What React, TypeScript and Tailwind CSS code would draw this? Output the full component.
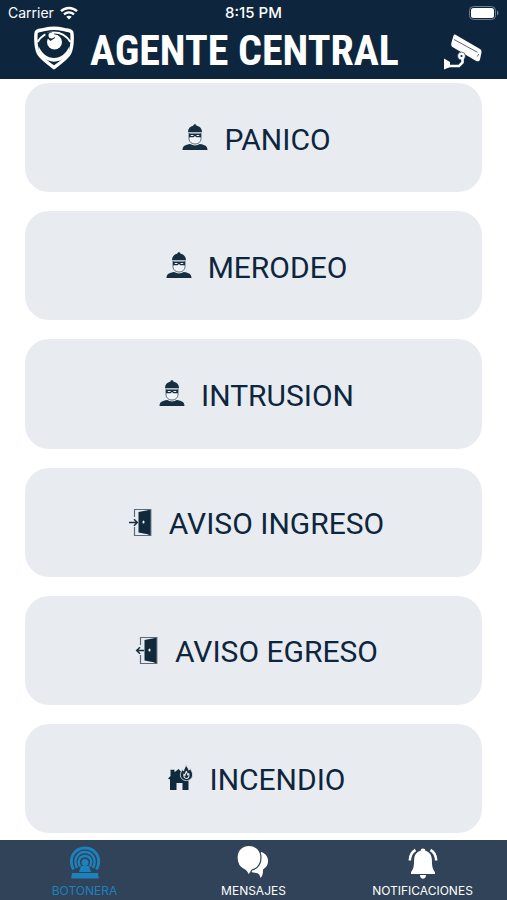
import type { ReactNode } from "react";

const ThiefIcon = () => (
  <svg viewBox="0 0 26 28" className="h-7 w-[26px]" fill="#152f40" aria-hidden="true">
    <path d="M6 8.200C6 4.500 8 2.400 11.300 1.800 11.400.8 11.900.3 12.900.3s1.500.5 1.600 1.500C17.800 2.400 20 4.500 20 8.200z" />
    <path d="M7 9v5.500c0 3.200 2.600 5.500 6 5.500s6-2.300 6-5.500V9" fill="#f1f4f7" stroke="#152f40" strokeWidth=".7" />
    <path d="M7 9.500h12v3.800h-4.600L13 12l-1.400 1.300H7z" />
    <path d="M8.800 10.900h2.700v1.100H8.800zM14.500 10.900h2.700v1.100h-2.700z" fill="#f1f4f7" />
    <path d="M.5 26c0-3.600 2.600-5.300 7.800-5.900 2.600 1.700 6.800 1.700 9.400 0 5.200.6 7.800 2.300 7.800 5.900z" />
  </svg>
);

const DoorIcon = ({ exit = false }: { exit?: boolean }) => (
  <svg viewBox="0 0 24 28" className="h-7 w-6" fill="none" stroke="#152f40" aria-hidden="true">
    <path d="M5.500 9V1.500h16.300v26H5.500V19" stroke="#5a6c79" strokeWidth="1.200" />
    <path d="M9.500 4 20 2v24.500l-10.500-2z" fill="#10293b" stroke="none" />
    <path d="M20.500 2v25" stroke="#10293b" strokeWidth="2" />
    <ellipse cx="14.500" cy="14" rx="1" ry="1.500" fill="#fff" stroke="none" />
    <path
      d={exit ? "M9 14.500H2M5 11.300 1.700 14.500 5 17.700" : "M0 14.500h8M5 11.300l3.300 3.200L5 17.700"}
      strokeWidth="1.500"
    />
  </svg>
);

const FireIcon = () => (
  <svg viewBox="0 0 26 28" className="h-7 w-[26px]" fill="#10293b" aria-hidden="true">
    <path d="M1 14.500 3.500 12V5.800h4v2.500L11.500 5l3 3 8.500 7-1.500 1.500V26h-6v-7H9.500v7H3V15.500z" />
    <path
      d="M19 0c.4 3 2.300 3.700 2.900 6.300l1.500-1.700c.3 1.500 2.300 3.500 2.200 6.400-.1 3.300-2.700 5.600-6.100 5.600-3.600 0-6.300-2.500-6.100-5.900.1-2.500 1.300-3.700 1.800-5.300l1.300 1.700C17 4.900 18.800 3 19 0z"
      stroke="#e8ecf1"
      strokeWidth=".8"
    />
    <path
      d="M19.500 7c.1 1.800 1 2.300 1.100 3.600l1.200-.9c.7 2.500-.2 4.500-2 4.800-2.300.1-3.400-1.900-2.900-4.200l1.100 1c-.1-1.600 1.100-2.600 1.500-4.300z"
      fill="none"
      stroke="#e8ecf1"
      strokeWidth="1.100"
    />
  </svg>
);

const ShieldLogo = () => (
  <svg viewBox="0 0 40 44" className="h-11 w-10" fill="none" aria-hidden="true">
    <path
      d="M2 7.500C2 5 4 4.700 8 4c5-1 8-1.700 12-1.700S27 3 32 4c4 .7 6 1 6 3.500.5 8 .5 14-2.500 20C33 32 27 36.500 20 41.500 13 36.500 7 32 4.500 27.500 1.500 21.500 1.500 15.500 2 7.500z"
      fill="#0e263d"
      stroke="#fff"
      strokeWidth="3.400"
    />
    <path d="M4.500 20C8 28 13.500 32 20 32s12-4 15.500-12c0 5-1.500 9-4 11.500C24.500 37 15.500 37 8.500 31.500c-2.500-2.500-4-6.500-4-11.500z" fill="#fff" />
    <path d="M3.500 16C8 8.500 13.500 6.500 20 6.500c7.500 0 13 4 16.500 9.500" stroke="#fff" strokeWidth="2" />
    <circle cx="20.500" cy="16" r="7.500" fill="#fff" />
    <path d="M11 6.500 17.500 6l3.500 6-4.500 3-4.500-4z" fill="#0e263d" />
    <circle cx="17.500" cy="9.500" r="3" fill="#fff" />
  </svg>
);

const CameraIcon = () => (
  <svg viewBox="0 0 40 37" className="h-[37px] w-10" fill="#fff" aria-hidden="true">
    <path d="M12.500.8 37 15c1.500 1 1.700 2.200 1.400 4L37 25.500c-.5 1.800-2 2.200-3.800 1.500L9.500 13C8.200 12 8 10.500 8.500 8.500l1.800-6.200C10.700.8 11.500.3 12.500.8z" />
    <path d="m11 5.500 23.500 12.800M34.300 22.500l1.500-2.500" fill="none" stroke="#0e263d" strokeWidth=".7" />
    <circle cx="18.500" cy="22" r="3.900" stroke="#0e263d" strokeWidth=".6" />
    <circle cx="18.500" cy="22" r="1.100" fill="#0e263d" />
    <path d="M19.500 24v4.500L16 32H5" fill="none" stroke="#fff" strokeWidth="2.600" />
    <path d="m1 24.500 6 3.500v5l-6 2.500z" />
  </svg>
);

const WifiIcon = () => (
  <svg viewBox="0 0 18 14" className="h-3.5 w-[18px]" fill="none" stroke="#fff" strokeWidth="2.400" aria-hidden="true">
    <path d="M1 5.200c4.600-4.300 11.400-4.300 16 0M4 8.400c3-2.700 7-2.700 10 0" />
    <path d="M9 13.500 6.300 10.800c1.600-1.400 3.800-1.400 5.400 0z" fill="#fff" stroke="none" />
  </svg>
);

const BatteryIcon = () => (
  <svg viewBox="0 0 30 14" className="h-3.5 w-[30px]" aria-hidden="true">
    <rect x=".5" y=".5" width="26" height="13" rx="4" fill="none" stroke="#71808e" />
    <rect x="2" y="2" width="23" height="10" rx="2.500" fill="#fff" />
    <path d="M28 4.500c2 .8 2 4.200 0 5z" fill="#71808e" />
  </svg>
);

const SirenIcon = () => (
  <svg viewBox="0 0 30 34" className="h-[34px] w-[30px]" fill="none" stroke="currentColor" aria-hidden="true">
    <path d="M3.500 24.500C-2.500 12.500 5 3 15 3s17.500 9.500 11.500 21.500" strokeWidth="2.800" />
    <path d="M7 23C2.700 14 8 7 15 7s12.300 7 8 16" strokeWidth="2.400" />
    <path d="M10 21.500c-3-6 0-10.500 5-10.500s8 4.500 5 10.500" strokeWidth="2.400" />
    <circle cx="15" cy="17.500" r="3.500" fill="currentColor" stroke="none" />
    <path d="M11 21h8l2 6H9zM2 28h26l.8 5.500H1.200z" fill="currentColor" stroke="none" />
  </svg>
);

const ChatIcon = () => (
  <svg viewBox="0 0 34 34" className="h-[34px] w-[34px]" fill="#fff" aria-hidden="true">
    <path d="M24 7c5 1.500 7.500 5.500 7 10-.4 3.500-2.300 5.800-5 7.500.2 3.500-.5 6.500-2.500 8.500-.5-3-1.800-5-5.500-5.200-2.300 0-4-.7-5.500-2z" />
    <path
      d="M12 .3C18.500.3 24 5 24 12.500c0 6.500-3.500 11-9 12.500l-3.500 5.500c-.8-2.700-2-4.700-4.500-6C2.500 22.500 0 18 0 12.500 0 5 5.500.3 12 .3z"
      stroke="#304358"
      strokeWidth="1.200"
    />
  </svg>
);

const BellIcon = () => (
  <svg viewBox="0 0 30 34" className="h-[34px] w-[30px]" fill="#fff" aria-hidden="true">
    <path d="M15 3.500c1.500 0 2.300.9 2.400 2.300 4.200 1.200 6.400 4.500 6.500 9.200.1 6 .6 9.300 3.100 12v2H3v-2C5.500 24.300 6 21 6.100 15c.1-4.700 2.300-8 6.500-9.200.1-1.400.9-2.300 2.400-2.300zM12 30h6c0 5-6 5-6 0z" />
    <path d="M7.500 5C3.800 7 2 10.500 1.800 15.500M22.500 5c3.700 2 5.500 5.500 5.700 10.500" fill="none" stroke="#fff" strokeWidth="2.600" />
  </svg>
);

const actions: { label: string; icon: ReactNode }[] = [
  { label: "PANICO", icon: <ThiefIcon /> },
  { label: "MERODEO", icon: <ThiefIcon /> },
  { label: "INTRUSION", icon: <ThiefIcon /> },
  { label: "AVISO INGRESO", icon: <DoorIcon /> },
  { label: "AVISO EGRESO", icon: <DoorIcon exit /> },
  { label: "INCENDIO", icon: <FireIcon /> },
];

const tabs = [
  { label: "BOTONERA", icon: <SirenIcon />, active: true },
  { label: "MENSAJES", icon: <ChatIcon />, active: false },
  { label: "NOTIFICACIONES", icon: <BellIcon />, active: false },
];

const Header = () => (
  <header className="bg-[#0e263d] text-white">
    <div className="grid h-[26px] grid-cols-3 items-center px-2 text-sm">
      <div className="flex items-center gap-1.5">
        <span>Carrier</span>
        <WifiIcon />
      </div>
      <span className="text-center text-[15px] font-medium">8:15 PM</span>
      <div className="flex justify-end">
        <BatteryIcon />
      </div>
    </div>
    <div className="flex h-[53px] items-start pl-[34px] pr-6">
      <ShieldLogo />
      <h1 className="ml-4 whitespace-nowrap font-['Roboto_Condensed','Liberation_Sans_Narrow',sans-serif] text-[42px] font-bold leading-[50px]">
        AGENTE CENTRAL
      </h1>
      <button type="button" aria-label="Cámaras" className="ml-auto mt-2">
        <CameraIcon />
      </button>
    </div>
  </header>
);

const App = () => {
  return (
    <div className="flex min-h-screen flex-col bg-white font-['Inter',sans-serif]">
      <Header />

      <main className="flex flex-1 flex-col gap-[19px] px-[25px] pb-[7px] pt-1">
        {actions.map(({ label, icon }) => (
          <button
            key={label}
            type="button"
            className="flex flex-1 items-center justify-center gap-4 rounded-[24px] bg-[#e8ecf1] pl-1.5 font-['Roboto',sans-serif] text-3xl text-[#0e263d]"
          >
            {icon}
            <span className="pt-1">{label}</span>
          </button>
        ))}
      </main>

      <nav className="grid h-[60px] grid-cols-3 bg-[#304358] text-xs text-white">
        {tabs.map(({ label, icon, active }) => (
          <button
            key={label}
            type="button"
            aria-current={active ? "page" : undefined}
            className={`flex flex-col items-center pt-[5px] ${active ? "text-[#1c82bd]" : "text-white"}`}
          >
            {icon}
            <span className="mt-1 leading-4">{label}</span>
          </button>
        ))}
      </nav>
    </div>
  );
};

export default App;
